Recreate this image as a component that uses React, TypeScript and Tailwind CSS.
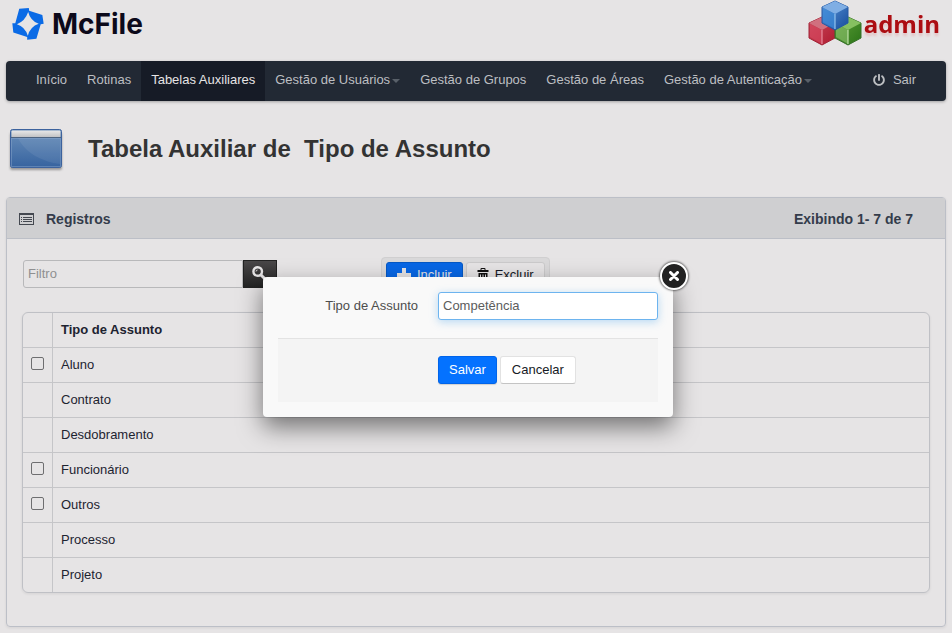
import { useState } from "react";
import { FaPowerOff } from "react-icons/fa";
import clsx from "clsx";

const navItems = [
  { label: "Início" },
  { label: "Rotinas" },
  { label: "Tabelas Auxiliares", active: true },
  { label: "Gestão de Usuários", dropdown: true },
  { label: "Gestão de Grupos" },
  { label: "Gestão de Áreas" },
  { label: "Gestão de Autenticação", dropdown: true },
];

const records = [
  { name: "Aluno", removable: true },
  { name: "Contrato", removable: false },
  { name: "Desdobramento", removable: false },
  { name: "Funcionário", removable: true },
  { name: "Outros", removable: true },
  { name: "Processo", removable: false },
  { name: "Projeto", removable: false },
];

function McFileMark() {
  return (
    <svg className="h-8 w-8" viewBox="36 25 97 97" aria-hidden="true">
      <path
        fill="#0b6be6"
        fillRule="evenodd"
        d="M58 27L87 25L88 33L128 46L132 73L123 74L110 118L82 121L82 113L40 99L37 71L46 71ZM85 37Q92 64 117 73Q91 82 84 109Q76 82 51 74Q76 64 85 37Z"
      />
    </svg>
  );
}

function CubesMark() {
  return (
    <svg className="h-[46px] w-[54px]" viewBox="0 0 54 46" aria-hidden="true">
      <defs>
        <linearGradient id="red" x1="0" y1="0" x2="1" y2="1">
          <stop offset="0" stopColor="#c84a5c" />
          <stop offset="1" stopColor="#b01a30" />
        </linearGradient>
        <linearGradient id="blue" x1="0" y1="0" x2="1" y2="1">
          <stop offset="0" stopColor="#5c98da" />
          <stop offset="1" stopColor="#174c9c" />
        </linearGradient>
        <linearGradient id="green" x1="0" y1="0" x2="1" y2="1">
          <stop offset="0" stopColor="#5fa038" />
          <stop offset="1" stopColor="#2b7418" />
        </linearGradient>
      </defs>
      <path d="M14 17L27 23V38L14 45L1 38V23Z" fill="url(#red)" stroke="#a32336" />
      <path d="M14 17L27 23L14 30L1 23Z" fill="#d0707f" />
      <path d="M2 24L14 30V44L2 37Z" fill="#d84a60" opacity=".6" />
      <path d="M14 30V44" stroke="#ef9cac" />
      <path d="M40 17L53 23V38L40 45L27 38V23Z" fill="url(#green)" stroke="#37702a" />
      <path d="M40 17L53 23L40 30L27 23Z" fill="#86c060" />
      <path d="M28 24L40 30V44L28 37Z" fill="#94c674" opacity=".55" />
      <path d="M40 30V44" stroke="#d3efbe" />
      <path d="M27 1L40 7V23L27 30L14 23V7Z" fill="url(#blue)" stroke="#2458a4" />
      <path d="M27 1L40 7L27 14L14 7Z" fill="#7faee4" />
      <path d="M15 8L27 14V29L15 22Z" fill="#3d8ad8" opacity=".7" />
      <path d="M27 14V29" stroke="#a5d2f6" />
    </svg>
  );
}

function WindowIcon() {
  return (
    <svg className="h-12 w-14" viewBox="0 0 56 48" aria-hidden="true">
      <defs>
        <linearGradient id="pane" x1="0" y1="0" x2="0" y2="1">
          <stop offset="0" stopColor="#6a8fba" />
          <stop offset="1" stopColor="#36639f" />
        </linearGradient>
        <linearGradient id="bar" x1="0" y1="0" x2="0" y2="1">
          <stop offset="0" stopColor="#e8e8e8" />
          <stop offset="1" stopColor="#bfc0c2" />
        </linearGradient>
        <filter id="soft" x="-10%" y="-10%" width="120%" height="130%">
          <feGaussianBlur stdDeviation="1.3" />
        </filter>
      </defs>
      <rect x="2" y="8" width="52" height="37" rx="2" fill="#777" opacity=".7" filter="url(#soft)" />
      <rect x="2.5" y="4.5" width="51" height="38" rx="2" fill="url(#pane)" stroke="#3c629d" />
      <rect x="3.5" y="5.5" width="49" height="7" rx="1" fill="url(#bar)" />
      <path d="M3 12.5H53" stroke="#4e6480" />
      <path d="M4 13H52V39C35 37 17 28 10 13H4Z" fill="#fff" opacity=".07" />
      <rect x="3.5" y="13.5" width="49" height="28" fill="none" stroke="#8ba9cf" opacity=".45" />
    </svg>
  );
}

function ListIcon() {
  return (
    <svg className="h-3 w-[15px]" viewBox="0 0 15 12" fill="none" stroke="#444850" aria-hidden="true">
      <rect x=".5" y=".5" width="14" height="11" />
      <path d="M1 1.5H14M2 4.5H3M2 6.5H3M2 8.5H3M4 4.5H13M4 6.5H13M4 8.5H13" />
    </svg>
  );
}

function SearchIcon() {
  return (
    <svg className="mr-0.5 h-[14px] w-[14px]" viewBox="0 0 14 14" fill="none" stroke="#e6e4e5" aria-hidden="true">
      <circle cx="5.7" cy="5.5" r="4.3" strokeWidth="2.4" />
      <path d="M9 9L12.3 12.3" strokeWidth="3" strokeLinecap="round" />
      <path d="M4 5.5Q4 4 5.5 4" />
    </svg>
  );
}

function PlusIcon() {
  return (
    <svg className="h-[14px] w-[14px]" viewBox="0 0 14 14" fill="#e6e4e5" aria-hidden="true">
      <path d="M5 0H9V5H14V9H9V14H5V9H0V5H5Z" />
    </svg>
  );
}

function TrashIcon() {
  return (
    <svg className="h-[14px] w-3" viewBox="0 0 12 14" fill="#111" aria-hidden="true">
      <path d="M.5 2H3.5V1Q3.5 0 4.5 0H7.5Q8.5 0 8.5 1V2H11.5V4H.5ZM4.5 1V2H7.5V1Z" fillRule="evenodd" />
      <path d="M1.5 5H10.5V13Q10.5 14 9.5 14H2.5Q1.5 14 1.5 13ZM3 6.5V12.5H4V6.5ZM5.5 6.5V12.5H6.5V6.5ZM8 6.5V12.5H9V6.5Z" fillRule="evenodd" />
    </svg>
  );
}

function Caret() {
  return <span className="mt-px ml-0.5 border-x-4 border-t-4 border-x-transparent border-t-[#596069]" />;
}

function SiteHeader() {
  return (
    <header>
      <div className="flex h-[61px] items-start justify-between px-3">
        <a href="#" className="flex h-12 items-center gap-2">
          <McFileMark />
          <span className="font-['Inter',sans-serif] text-[28px] leading-8 font-bold text-[#0c091a]">McFile</span>
        </a>
        <a href="#" className="flex items-center gap-0.5">
          <CubesMark />
          <span className="pt-0.5 font-['Open_Sans',sans-serif] text-2xl leading-8 font-bold text-[#ac0d12] drop-shadow-[0_3px_1px_rgba(220,70,70,0.2)]">
            admin
          </span>
        </a>
      </div>

      <nav className="mx-[6px] flex h-10 items-stretch rounded bg-[#222934] px-5 text-[#bdbfc2] shadow-[0_1px_3px_rgba(0,0,0,0.3)]">
        {navItems.map((item) => (
          <a
            key={item.label}
            href="#"
            className={clsx(
              "flex items-center px-[10px] pb-0.5 whitespace-nowrap",
              item.active && "bg-[#161b26] text-[#e6e4e5]",
            )}
          >
            {item.label}
            {item.dropdown && <Caret />}
          </a>
        ))}
        <a href="#" className="ml-auto flex items-center gap-2 px-[10px] pb-0.5">
          <FaPowerOff className="h-3 w-3" />
          Sair
        </a>
      </nav>
    </header>
  );
}

function RecordsTable() {
  return (
    <table className="w-full border-separate border-spacing-0 rounded-md border border-[#bfc0c5] text-left text-[#1d2330] shadow-[0_1px_3px_rgba(0,0,0,0.08)]">
      <thead>
        <tr className="h-[34px]">
          <th className="w-[29px]" />
          <th className="border-l border-[#c5c5c8] px-2 font-bold">Tipo de Assunto</th>
        </tr>
      </thead>
      <tbody>
        {records.map((record) => (
          <tr key={record.name} className="h-[35px]">
            <td className="border-t border-[#c5c5c8] px-2 pb-1">
              {record.removable && (
                <input
                  type="checkbox"
                  aria-label={record.name}
                  className="block h-[13px] w-[13px] appearance-none rounded-[2px] border border-[#6e6e70] checked:bg-[#006dfe]"
                />
              )}
            </td>
            <td className="border-t border-l border-[#c5c5c8] px-2">{record.name}</td>
          </tr>
        ))}
      </tbody>
    </table>
  );
}

function EditDialog({ onClose }: { onClose: () => void }) {
  const [value, setValue] = useState("Competência");

  return (
    <div className="absolute inset-0 flex items-start justify-center pt-[277px] pr-4">
      <div
        role="dialog"
        aria-label="Tipo de Assunto"
        className="relative w-[410px] rounded bg-[#f9f9f9] p-[15px] shadow-[0_10px_25px_rgba(0,0,0,0.5)]"
      >
        <button
          type="button"
          onClick={onClose}
          aria-label="Fechar"
          className="absolute -top-[15px] -right-[15px] flex h-7 w-7 items-center justify-center rounded-full border-2 border-white bg-[#222] shadow-[0_0_2px_1px_rgba(0,0,0,0.5)]"
        >
          <svg className="h-[10px] w-[10px]" viewBox="0 0 10 10" stroke="#fff" strokeWidth="3" strokeLinecap="round">
            <path d="M1.5 1.5L8.5 8.5M8.5 1.5L1.5 8.5" />
          </svg>
        </button>

        <div className="flex gap-5">
          <label htmlFor="subject" className="w-[140px] pt-1 text-right text-[#4d4d4d]">
            Tipo de Assunto
          </label>
          <input
            id="subject"
            value={value}
            onChange={(e) => setValue(e.target.value)}
            className="h-7 min-w-0 flex-1 rounded-[3px] border border-[#6db4ef] bg-white px-1 pb-0.5 text-[#5c5c5c] shadow-[0_2px_8px_rgba(82,168,236,0.4)] outline-none"
          />
        </div>

        <div className="mt-[18px] flex gap-[3px] border-t border-[#e3e3e3] bg-[#f4f4f4] pt-[17px] pb-[18px] pl-40">
          <button
            type="button"
            className="h-7 rounded-[3px] border border-[#0064ea] bg-[#0472ff] px-[10px] text-white shadow-[0_1px_1px_rgba(0,0,0,0.15)]"
          >
            Salvar
          </button>
          <button
            type="button"
            onClick={onClose}
            className="h-7 rounded-[3px] border border-[#e2e2e2] border-b-[#c4c4c4] bg-white px-[11px] text-[#161a25]"
          >
            Cancelar
          </button>
        </div>
      </div>
    </div>
  );
}

export default function App() {
  const [isEditing, setIsEditing] = useState(true);

  return (
    <div className="relative min-h-screen bg-[#e6e4e5] pb-[6px] font-['Liberation_Sans',Arial,sans-serif] text-[13px] leading-5">
      <SiteHeader />

      <div className="flex h-24 items-center gap-6 px-2">
        <WindowIcon />
        <h1 className="text-2xl font-bold whitespace-pre text-[#333]">{"Tabela Auxiliar de  Tipo de Assunto"}</h1>
      </div>

      <section className="mx-[6px] rounded border border-[#bcbfc7] shadow-[0_1px_3px_rgba(0,0,0,0.08)]">
        <div className="flex h-[41px] items-center justify-between border-b border-[#bcbfc7] bg-[#cfcfd1] pt-0.5 pr-8 pl-3 text-sm font-bold text-[#343c4b]">
          <h2 className="flex items-center gap-3">
            <ListIcon />
            Registros
          </h2>
          <span>Exibindo 1- 7 de 7</span>
        </div>

        <div className="px-[15px] pt-[18px] pb-[33px]">
          <div className="flex items-start">
            <div className="mt-[3px] flex pl-px">
              <input
                aria-label="Filtro"
                placeholder="Filtro"
                className="h-7 w-[220px] rounded-l-[3px] border border-[#b8b8ba] px-1 pb-0.5 outline-none placeholder:text-[#8f8f91]"
              />
              <button
                type="button"
                aria-label="Pesquisar"
                className="flex h-7 w-[34px] justify-center border border-[#222] bg-linear-to-b from-[#4a4849] to-[#232323] pt-[5px]"
              >
                <SearchIcon />
              </button>
            </div>
            <div className="ml-[104px] flex gap-[3px] rounded border border-[#d0cfd0] bg-[#dad9da] p-1">
              <button
                type="button"
                className="flex h-7 items-center gap-[6px] rounded-[3px] border border-[#0558c4] bg-[#0867e5] px-[10px] pb-0.5 text-[#e6e4e5]"
              >
                <PlusIcon />
                Incluir
              </button>
              <button
                type="button"
                className="flex h-7 items-center gap-[6px] rounded-[3px] border border-[#cbcacb] bg-[#e6e4e5] px-[10px] pb-0.5 text-[#161a25]"
              >
                <TrashIcon />
                Excluir
              </button>
            </div>
          </div>

          <div className="mt-[17px]">
            <RecordsTable />
          </div>
        </div>
      </section>

      {isEditing && <EditDialog onClose={() => setIsEditing(false)} />}
    </div>
  );
}
